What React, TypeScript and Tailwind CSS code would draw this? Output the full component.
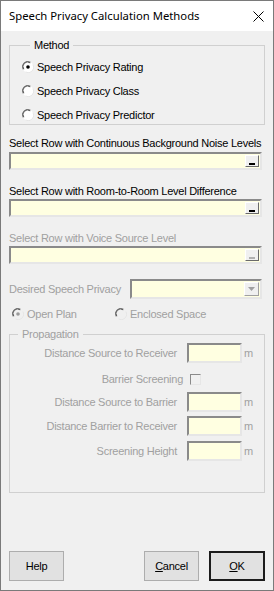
import React from 'react';

const font = { fontFamily: '"Liberation Sans", Arial, sans-serif' };

function Radio({ checked, disabled }: { checked?: boolean; disabled?: boolean }) {
  return (
    <svg width="12" height="12" viewBox="0 0 12 12" className="shrink-0">
      <circle cx="6" cy="6" r="5.5" fill={disabled ? '#f0f0f0' : '#ffffff'} />
      <path d="M1 8.5 A5.5 5.5 0 0 1 8.5 1" fill="none" stroke="#8a8a8a" strokeWidth="1" />
      <path d="M1.8 8.2 A4.6 4.6 0 0 1 8.2 1.8" fill="none" stroke="#555" strokeWidth="1" />
      <path d="M3.5 11 A5.5 5.5 0 0 0 11 3.5" fill="none" stroke="#e6e6e6" strokeWidth="1" />
      {checked && <circle cx="6" cy="6" r="1.8" fill={disabled ? '#9a9a9a' : '#000'} />}
    </svg>
  );
}

function PickButton({ disabled }: { disabled?: boolean }) {
  return (
    <div className="w-[14px] h-[12px] mb-[1px] mr-[1px] bg-[#f0f0f0] border border-t-white border-l-white border-b-[#6a6a6a] border-r-[#6a6a6a] flex items-end justify-center pb-[1px]">
      <div className={`w-[6px] h-[2px] ${disabled ? 'bg-[#b0b0b0]' : 'bg-black'}`} />
    </div>
  );
}

function RefField({ disabled }: { disabled?: boolean }) {
  return (
    <div className="w-[253px] h-[18px] bg-[#ffffe1] border-2 border-t-[#8a8a8a] border-l-[#8a8a8a] border-b-[#e6e6e6] border-r-[#e6e6e6] flex items-end justify-end">
      <PickButton disabled={disabled} />
    </div>
  );
}

function Box() {
  return (
    <div className="w-[55px] h-[20px] bg-[#ffffe1] border-2 border-t-[#8a8a8a] border-l-[#8a8a8a] border-b-[#e6e6e6] border-r-[#e6e6e6]" />
  );
}

function MeasureRow({ label }: { label: string }) {
  return (
    <div className="flex items-center h-[20px]">
      <span className="w-[177px] text-right pr-[10px] text-[#a0a0a0]">{label}</span>
      <Box />
      <span className="ml-[2px] text-[#a0a0a0]">m</span>
    </div>
  );
}

export default function App() {
  return (
    <div className="w-[274px] h-[591px] bg-[#f0f0f0] border border-[#7a7a7a] flex flex-col text-[11px] leading-[14px] tracking-[-0.25px] whitespace-nowrap text-black" style={font}>
      {/* title bar */}
      <div className="h-[30px] bg-white flex items-center justify-between pl-[8px] pr-[9px] shrink-0">
        <span className="text-[11.3px] tracking-normal" style={{ fontFamily: '"Noto Sans", "Liberation Sans", sans-serif' }}>
          Speech Privacy Calculation Methods
        </span>
        <svg width="11" height="11" viewBox="0 0 11 11">
          <path d="M0.5 0.5 L10.5 10.5 M10.5 0.5 L0.5 10.5" stroke="#000" strokeWidth="1" />
        </svg>
      </div>

      <div className="flex-1 flex flex-col pl-[8px] pr-[8px] pb-[9px]">
        <fieldset className="mt-[7px] h-[87px] border border-[#d0d0d0] pl-[12px]">
          <legend className="px-[4px] ml-[8px]">Method</legend>
          <div className="flex flex-col gap-[8px] pt-[7px]">
            <label className="flex items-center gap-[3px] h-[16px]">
              <Radio checked />
              <span>Speech Privacy Rating</span>
            </label>
            <label className="flex items-center gap-[3px] h-[16px]">
              <Radio />
              <span>Speech Privacy Class</span>
            </label>
            <label className="flex items-center gap-[3px] h-[16px]">
              <Radio />
              <span>Speech Privacy Predictor</span>
            </label>
          </div>
        </fieldset>

        <div className="mt-[11px]">Select Row with Continuous Background Noise Levels</div>
        <div className="mt-[2px]">
          <RefField />
        </div>

        <div className="mt-[14px]">Select Row with Room-to-Room Level Difference</div>
        <div className="mt-[1px]">
          <RefField />
        </div>

        <div className="mt-[14px] text-[#a0a0a0]">Select Row with Voice Source Level</div>
        <div className="mt-[1px]">
          <RefField disabled />
        </div>

        <div className="mt-[15px] flex items-center h-[20px]">
          <span className="w-[121px] text-[#a0a0a0]">Desired Speech Privacy</span>
          <div className="w-[132px] h-[20px] bg-[#ffffe1] border-2 border-t-[#8a8a8a] border-l-[#8a8a8a] border-b-[#e6e6e6] border-r-[#e6e6e6] flex items-center justify-end">
            <div className="w-[15px] h-[14px] mr-[1px] bg-[#f0f0f0] border border-t-white border-l-white border-b-[#a0a0a0] border-r-[#a0a0a0] flex items-center justify-center">
              <svg width="7" height="4" viewBox="0 0 7 4">
                <path d="M0 0 L7 0 L3.5 4 Z" fill="#a0a0a0" />
              </svg>
            </div>
          </div>
        </div>

        <div className="mt-[8px] flex items-center h-[14px] text-[#a0a0a0]">
          <label className="flex items-center gap-[3px] ml-[3px] w-[103px]">
            <Radio checked disabled />
            <span>Open Plan</span>
          </label>
          <label className="flex items-center gap-[3px]">
            <Radio disabled />
            <span>Enclosed Space</span>
          </label>
        </div>

        <fieldset className="mt-[6px] h-[166px] border border-[#d0d0d0]">
          <legend className="px-[4px] ml-[8px] text-[#a0a0a0]">Propagation</legend>
          <div className="flex flex-col pt-[2px]">
            <MeasureRow label="Distance Source to Receiver" />
            <div className="flex items-center h-[14px] mt-[9px]">
              <span className="w-[180px] text-right pr-[7px] text-[#a0a0a0]">Barrier Screening</span>
              <div className="w-[11px] h-[11px] border border-t-[#8a8a8a] border-l-[#8a8a8a] border-b-[#e6e6e6] border-r-[#e6e6e6]" />
            </div>
            <div className="mt-[6px]">
              <MeasureRow label="Distance Source to Barrier" />
            </div>
            <div className="mt-[4px]">
              <MeasureRow label="Distance Barrier to Receiver" />
            </div>
            <div className="mt-[5px]">
              <MeasureRow label="Screening Height" />
            </div>
          </div>
        </fieldset>

        <div className="mt-auto flex items-center">
          <button className="w-[55px] h-[30px] bg-[#e1e1e1] border border-[#adadad]">Help</button>
          <button className="ml-auto w-[55px] h-[30px] bg-[#e1e1e1] border border-[#adadad]">
            <span className="underline">C</span>ancel
          </button>
          <button className="ml-[10px] w-[56px] h-[30px] bg-[#e1e1e1] border-2 border-[#1c1c1c]">
            <span className="underline">O</span>K
          </button>
        </div>
      </div>
    </div>
  );
}
